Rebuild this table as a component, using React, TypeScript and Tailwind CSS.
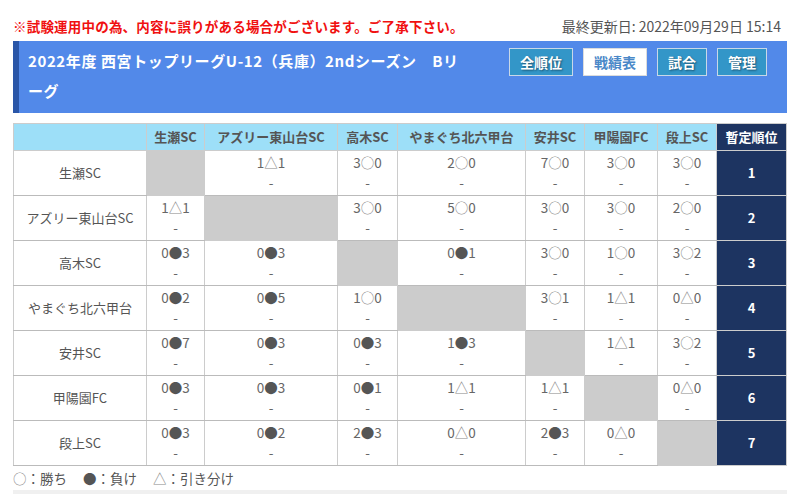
import React from 'react';

const TEAMS = ['生瀬SC', 'アズリー東山台SC', '高木SC', 'やまぐち北六甲台', '安井SC', '甲陽園FC', '段上SC'];
const COL_W = ['w-[58px]', 'w-[133px]', 'w-[60px]', 'w-[128px]', 'w-[59px]', 'w-[73px]', 'w-[59px]'];

// null = 自チーム（対角セル）
const RESULTS: (string | null)[][] = [
  [null, '1△1', '3○0', '2○0', '7○0', '3○0', '3○0'],
  ['1△1', null, '3○0', '5○0', '3○0', '3○0', '2○0'],
  ['0●3', '0●3', null, '0●1', '3○0', '1○0', '3○2'],
  ['0●2', '0●5', '1○0', null, '3○1', '1△1', '0△0'],
  ['0●7', '0●3', '0●3', '1●3', null, '1△1', '3○2'],
  ['0●3', '0●3', '0●1', '1△1', '1△1', null, '0△0'],
  ['0●3', '0●2', '2●3', '0△0', '2●3', '0△0', null],
];

const BUTTONS = [
  { name: '全順位', w: 'w-[64px]', active: false },
  { name: '戦績表', w: 'w-[64px]', active: true },
  { name: '試合', w: 'w-[50px]', active: false },
  { name: '管理', w: 'w-[50px]', active: false },
];

function Score({ value }: { value: string }) {
  const mark = value[1];
  return (
    <span>
      {value[0]}
      <span className={mark === '●' ? 'text-[#555]' : 'text-[#888]'}>{mark}</span>
      {value[2]}
    </span>
  );
}

export default function App() {
  return (
    <div
      className="w-[794px] h-[494px] bg-white overflow-hidden pl-[13px] pr-[7px] pt-[16px]"
      style={{ fontFamily: '"Noto Sans CJK JP", "Noto Sans", sans-serif' }}
    >
      {/* 注意書き */}
      <div className="flex items-center justify-between h-[20px] leading-[20px]">
        <span className="text-[13.5px] tracking-[0.2px] text-[#f01010] font-bold">
          ※試験運用中の為、内容に誤りがある場合がございます。ご了承下さい。
        </span>
        <span className="text-[14px] text-[#555] pr-[6px]">最終更新日: 2022年09月29日 15:14</span>
      </div>

      {/* HEADER */}
      <div className="mt-[5px] h-[72px] flex bg-[#5289e9] border-l-[6px] border-[#2a56a8]">
        <div className="flex-1">
          <h1 className="w-[445px] pl-[9px] pt-[5px] text-[15px] tracking-[0.6px] leading-[30px] font-bold text-white">
            2022年度 西宮トップリーグU-12（兵庫）2ndシーズン　Bリーグ
          </h1>
        </div>
        <div className="flex gap-[10px] pt-[7px] pr-[20px]">
          {BUTTONS.map((b) => (
            <div
              key={b.name}
              className={`${b.w} h-[28px] flex items-center justify-center text-[14px] font-bold border ${
                b.active
                  ? 'bg-white text-[#4a88c8] border-[#dcdcdc]'
                  : 'bg-[#3396c8] text-white border-[#c8d8e8] [text-shadow:1px_1px_2px_rgba(0,0,0,0.45)]'
              }`}
            >
              {b.name}
            </div>
          ))}
        </div>
      </div>

      {/* 戦績表 */}
      <table className="mt-[10px] w-[774px] table-fixed border-collapse text-[13px]">
        <thead>
          <tr className="h-[27px]">
            <th className="w-[133px] bg-[#9ddff8] border border-[#ccc]"></th>
            {TEAMS.map((t, i) => (
              <th key={t} className={`${COL_W[i]} bg-[#9ddff8] border border-[#ccc] font-bold text-[#555] whitespace-nowrap p-0`}>
                {t}
              </th>
            ))}
            <th className="bg-[#1d3461] border border-[#ccc] font-bold text-white">暫定順位</th>
          </tr>
        </thead>
        <tbody>
          {TEAMS.map((team, r) => (
            <tr key={team} className="h-[45px]">
              <td className="border-x border-solid border-[#ccc] border-b border-b-[#bbb] border-dotted text-center text-[#555]">
                {team}
              </td>
              {RESULTS[r].map((res, c) =>
                res === null ? (
                  <td key={c} className="bg-[#cccccc] border-x border-[#ccc]"></td>
                ) : (
                  <td
                    key={c}
                    className="align-top text-center text-[13.5px] text-[#666] leading-[20px] pt-px border-x border-solid border-[#ccc] border-b border-b-[#bbb] border-dotted"
                  >
                    <div>
                      <Score value={res} />
                    </div>
                    <div>-</div>
                  </td>
                )
              )}
              <td className="bg-[#1d3461] text-white font-bold text-center border border-[#ccc]">{r + 1}</td>
            </tr>
          ))}
        </tbody>
      </table>

      {/* 凡例 */}
      <div className="mt-[2px] h-[20px] text-[13.5px] leading-[20px] text-[#555] flex gap-[16px]">
        <span><span className="text-[#888]">○</span>：勝ち</span>
        <span><span className="text-[#555]">●</span>：負け</span>
        <span><span className="text-[#888]">△</span>：引き分け</span>
      </div>
      <div className="mt-[2px] h-[10px] bg-[#f0f0f0]"></div>
    </div>
  );
}
